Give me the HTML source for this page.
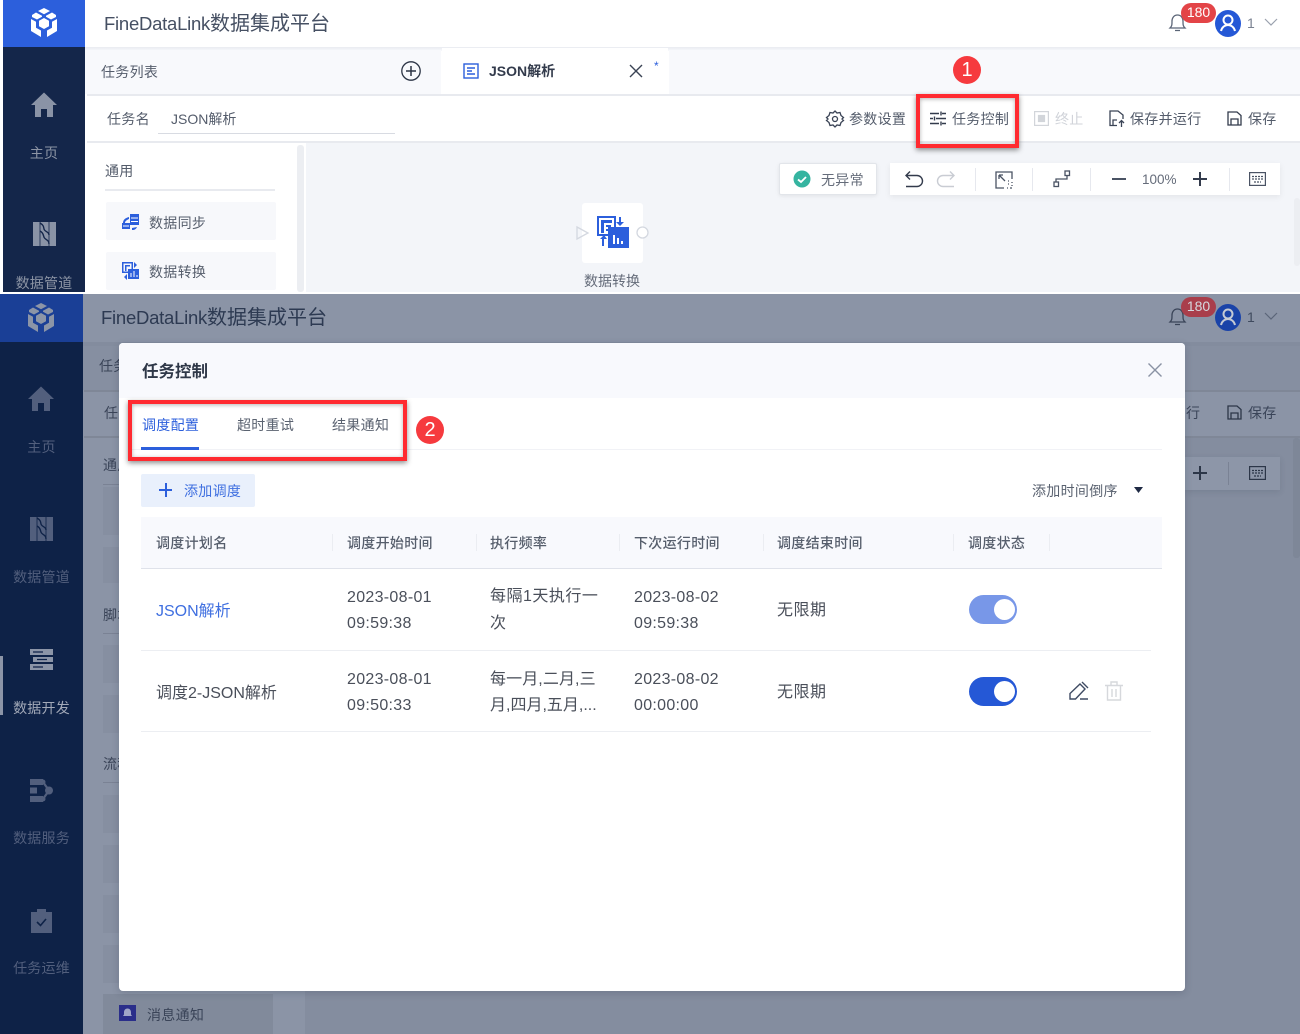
<!DOCTYPE html>
<html lang="zh"><head><meta charset="utf-8"><title>FineDataLink</title>
<style>
*{box-sizing:border-box}
html,body{margin:0;padding:0;background:#fff}
#p{position:relative;width:1300px;height:1034px;overflow:hidden;font-family:"Liberation Sans","Noto Sans CJK SC",sans-serif;background:#fff;filter:blur(.3px)}
.a{position:absolute}
.t{position:absolute;white-space:nowrap;line-height:20px;height:20px;font-size:14px;color:#4a5568;letter-spacing:.3px}
.s{color:#8d95a5;text-align:center}
svg{position:absolute;overflow:visible}
.dv{position:absolute;width:1px;background:#e6e8ee}
.r{font-size:16px;color:#4a4f5a;letter-spacing:.5px}
.h{color:#565e6c;font-weight:500}
.red{position:absolute;border:4px solid #ff2a30;box-shadow:0 2px 5px rgba(0,0,0,.45),inset 0 1px 4px rgba(0,0,0,.3)}
.c{position:absolute;width:28px;height:28px;border-radius:50%;background:#f63a3e;color:#fff;text-align:center;line-height:28px;font-size:20px}
.l{font-size:18.500px;letter-spacing:-.25px}
</style></head><body><div id="p">

<!-- TOP SECTION -->
<div class="a" style="left:0;top:0;width:1300px;height:292px;background:#fff;overflow:hidden">
<div class="a" style="left:3px;top:0;width:82px;height:292px;background:#14264a"></div>
<div class="a" style="left:3px;top:0;width:82px;height:47px;background:#2c5fdc"></div>
<svg style="left:30px;top:8px" width="28" height="30" viewBox="0 0 28 30" fill="#fff"><path d="M14 0l6 3-6 3.200-6-3.200zM6 4.500l6 3.200v1L7 11.500 2 9V7zM22 4.500L16 7.700v1l5 2.800 5-2.500V7zM14 10l5 2.800v5.400L14 21l-5-2.800v-5.400zM1 11l5 2.700v6l5 2.800v6.500L1 23zM27 11l-5 2.700v6l-5 2.800v6.500L27 23z"/></svg>
<div class="a" style="left:85px;top:47px;width:1215px;height:4px;background:linear-gradient(#e9ebf0,#f8f9fc)"></div>
<div class="t" style="left:104px;top:14px;font-size:20px;color:#465063;letter-spacing:0"><span class="l">FineDataLink</span>数据集成平台</div>
<svg style="left:1168px;top:13px" width="19" height="19" viewBox="0 0 19 19" fill="none" stroke="#5b6577" stroke-width="1.300"><path d="M2 15c2-2 2-3 2-7 0-3 2-6 5.500-6S15 5 15 8c0 4 0 5 2 7zM7 17.500h5"/></svg>
<div class="a" style="left:1181px;top:3px;width:35px;height:20px;border-radius:10px;background:#e34447;color:#fff;font-size:14px;line-height:19px;text-align:center">180</div>
<div class="a" style="left:1215px;top:10px;width:26px;height:27px;border-radius:50%;background:#2558d6"></div>
<svg style="left:1215px;top:10px" width="26" height="27" fill="none" stroke="#fff" stroke-width="2"><circle cx="13" cy="10" r="4.500"/><path d="M6 21c1-4 4-6 7-6s6 2 7 6"/></svg>
<div class="t" style="left:1247px;top:13px;color:#7a8291">1</div>
<svg style="left:1264px;top:18px" width="14" height="9" fill="none" stroke="#9aa1ae" stroke-width="1.200"><path d="M1 1l6 6 6-6"/></svg>

<!-- tab bar -->
<div class="a" style="left:85px;top:50px;width:356px;height:44px;background:#f8f9fc"></div>
<div class="a" style="left:442px;top:48px;width:226px;height:46px;background:#fff"></div>
<div class="a" style="left:669px;top:50px;width:631px;height:44px;background:#f8f9fc"></div>
<div class="a" style="left:87px;top:94px;width:1213px;height:2px;background:#e8eaef"></div>
<div class="t" style="left:101px;top:62px;color:#545c6b">任务列表</div>
<svg style="left:401px;top:61px" width="20" height="20" fill="none" stroke="#2b3445" stroke-width="1.300"><circle cx="10" cy="10" r="9.200"/><path d="M10 5v10M5 10h10" stroke-width="1.500"/></svg>
<svg style="left:463px;top:63px" width="16" height="16" fill="none" stroke="#2c5fdc" stroke-width="1.400"><rect x="1" y="1" width="14" height="14"/><path d="M4 5h8M4 8h5M4 11h8"/></svg>
<div class="t" style="left:489px;top:61px;font-weight:700;color:#333b4c;letter-spacing:0">JSON解析</div>
<svg style="left:629px;top:64px" width="14" height="14" stroke="#3a4354" stroke-width="1.400"><path d="M1 1l12 12M13 1L1 13"/></svg>
<div class="t" style="left:654px;top:56px;font-size:12px;color:#2c5fdc">*</div>

<!-- toolbar -->
<div class="a" style="left:87px;top:141px;width:1213px;height:2px;background:#e8eaef"></div>
<div class="t" style="left:107px;top:109px;color:#545c6b">任务名</div>
<div class="t" style="left:171px;top:109px;color:#545c6b;letter-spacing:0">JSON解析</div>
<div class="a" style="left:158px;top:133px;width:237px;height:1px;background:#d8dbe2"></div>
<svg style="left:826px;top:110px" width="18" height="18" fill="none" stroke="#3b4456" stroke-width="1.300"><path d="M9 1l2 2 3-.5 1 3 2.500 2L16 9l1.500 1.500-2.500 2-1 3-3-.5-2 2-2-2-3 .5-1-3L.5 10.500 2 9 .5 7.500 3 5.500l1-3 3 .5z"/><circle cx="9" cy="9" r="2.500"/></svg>
<div class="t" style="left:849px;top:109px;color:#545c6b">参数设置</div>
<svg style="left:930px;top:111px" width="16" height="15" stroke="#333b4c" stroke-width="1.400"><path d="M0 2.500h9M12 2.500h4M11 .5v4M0 7.500h3M6 7.500h10M4.500 5.500v4M0 12.500h9M12 12.500h4M11 10.500v4"/></svg>
<div class="t" style="left:952px;top:109px;color:#545c6b">任务控制</div>
<svg style="left:1034px;top:111px" width="15" height="15" fill="none" stroke="#d2d5da" stroke-width="1.200"><rect x=".6" y=".6" width="13.800" height="13.800"/><rect x="4.500" y="4.500" width="6" height="6" fill="#d2d5da"/></svg>
<div class="t" style="left:1055px;top:109px;color:#d0d3d9">终止</div>
<svg style="left:1109px;top:110px" width="17" height="18" fill="none" stroke="#3b4456" stroke-width="1.300"><path d="M8 15.500H1V1h8l5 4v4M4 15v-5h4M12.500 17v-6M10 13l2.500-2.500L15 13"/></svg>
<div class="t" style="left:1130px;top:109px;color:#545c6b">保存并运行</div>
<svg style="left:1227px;top:111px" width="15" height="15" fill="none" stroke="#333b4c" stroke-width="1.300"><path d="M1 1h9l4 3.500V14H1zM4 14V8h7v6"/></svg>
<div class="t" style="left:1248px;top:109px;color:#545c6b">保存</div>

<!-- left panel + canvas -->
<div class="a" style="left:297px;top:145px;width:7px;height:147px;background:#eceef2;border-radius:3px"></div>
<div class="a" style="left:306px;top:143px;width:994px;height:149px;background:#f3f5f9"></div>
<div class="t" style="left:105px;top:161px;color:#545c6b">通用</div>
<div class="a" style="left:105px;top:189px;width:170px;height:2px;background:#e8eaef"></div>
<div class="a" style="left:106px;top:202px;width:170px;height:38px;background:#f7f8fb;border-radius:2px"></div>
<div class="a" style="left:106px;top:252px;width:170px;height:38px;background:#f7f8fb;border-radius:2px"></div>
<svg style="left:122px;top:213px" width="17" height="18" fill="#2c5fdc"><path d="M8 1h9v11H8zM1 10c0-3 2-5 6-6v2C5 7 3 8 3 10zM0 10h8v6H0zM10 15l5-1c-1 2-2 3-5 3z"/><path d="M9 5h7M9 8.500h7M1 13h6" stroke="#fff"/></svg>
<div class="t" style="left:149px;top:213px;color:#565e6c">数据同步</div>
<svg style="left:122px;top:262px" width="17" height="18" fill="#2c5fdc"><path d="M0 0h11v11H0z"/><rect x="1.500" y="1.500" width="8" height="8" fill="#f7f8fb"/><path d="M3 3h5v1.500H4.500V9H3z"/><rect x="6" y="7" width="11" height="10"/><path d="M9 15V11M12 15V9M15 15v-2" stroke="#fff"/><path d="M12 0l3 3-3 3zM5 12l-3 3 3 3z"/></svg>
<div class="t" style="left:149px;top:262px;color:#565e6c">数据转换</div>
<svg style="left:30px;top:92px" width="28" height="26" fill="#8a93a6"><path d="M14 .5L27 13h-4v12h-6v-8h-6v8H5V13H1z"/></svg>
<div class="t s" style="left:3px;top:143px;width:82px;font-size:14px">主页</div>
<svg style="left:33px;top:222px" width="23" height="24"><rect width="23" height="24" fill="#8a93a6"/><path d="M7 0v24M16 0v24" stroke="#14264a" stroke-width=".8"/><path d="M7 1c5 3 3 5 4.500 7S16 10 16 13M7 9c4 2 3 5 4.500 7s4.500 2 4.500 6" fill="none" stroke="#14264a" stroke-width="1.400"/></svg>
<div class="t s" style="left:3px;top:273px;width:82px;font-size:14px;letter-spacing:.2px">数据管道</div>

<!-- canvas controls -->
<div class="a" style="left:779px;top:163px;width:98px;height:32px;background:#fff;border:1px solid #e2e5ea;border-radius:2px;box-shadow:0 1px 4px rgba(0,0,0,.08)"></div>
<svg style="left:793px;top:170px" width="18" height="18"><circle cx="9" cy="9" r="8.500" fill="#35b4a0"/><path d="M5 9.500l3 2.500 5-5" fill="none" stroke="#fff" stroke-width="1.800"/></svg>
<div class="t" style="left:821px;top:170px;color:#656c7a">无异常</div>
<div class="a" style="left:890px;top:163px;width:390px;height:32px;background:#fff;box-shadow:0 2px 6px rgba(0,0,0,.07)"></div>
<svg style="left:905px;top:171px" width="17" height="17" fill="none" stroke="#333b4c" stroke-width="1.400"><path d="M5 .5L1 4.500l4 4M1 4.500h11a4 4 0 010 11H1"/></svg>
<svg style="left:938px;top:171px" width="17" height="17" fill="none" stroke="#c9ccd3" stroke-width="1.400"><path d="M12 .5l4 4-4 4M16 4.500H5a4 4 0 000 11h11"/></svg>
<div class="dv" style="left:975px;top:168px;height:23px"></div>
<svg style="left:995px;top:171px" width="18" height="18" fill="none" stroke="#4a5364" stroke-width="1.300"><path d="M17 8V1H1v16h8" /><path d="M4 4l6 6M4 4h4M4 4v4"/><path d="M12 17h1M15 17h2M17 14v1M17 11v1M13 13h1M13 10h1" /></svg>
<div class="dv" style="left:1032px;top:168px;height:23px"></div>
<svg style="left:1053px;top:170px" width="17" height="18" fill="none" stroke="#4a5364" stroke-width="1.300"><rect x="1" y="12" width="4.500" height="4.500"/><rect x="12" y="1" width="4.500" height="4.500"/><path d="M3 12V9h11V6"/></svg>
<div class="dv" style="left:1090px;top:168px;height:23px"></div>
<div class="a" style="left:1112px;top:178px;width:14px;height:2px;background:#4a5364"></div>
<div class="t" style="left:1142px;top:170px;font-size:13.500px;color:#656c7a;letter-spacing:0">100%</div>
<div class="a" style="left:1193px;top:178px;width:14px;height:2px;background:#333b4c"></div>
<div class="a" style="left:1199px;top:172px;width:2px;height:14px;background:#333b4c"></div>
<div class="dv" style="left:1229px;top:168px;height:23px"></div>
<svg style="left:1249px;top:172px" width="17" height="14" fill="none" stroke="#4a5364" stroke-width="1.200"><rect x=".6" y=".6" width="15.800" height="12.800"/><path d="M3 4.500h11M3 7h11M5 10h7" stroke-dasharray="2 1"/></svg>
<div class="a" style="left:1294px;top:198px;width:6px;height:68px;background:#eceef2;border-radius:3px"></div>

<!-- node -->
<div class="a" style="left:582px;top:203px;width:61px;height:60px;background:#fff;border-radius:3px"></div>
<svg style="left:576px;top:226px" width="14" height="14" fill="none" stroke="#d4d8e0" stroke-width="1.300"><path d="M1 1l11 6-11 6z"/></svg>
<svg style="left:636px;top:226px" width="13" height="13" fill="#fff" stroke="#d4d8e0" stroke-width="1.300"><circle cx="6.500" cy="6.500" r="5.500"/></svg>
<svg style="left:597px;top:216px" width="32" height="32" fill="#2c5fdc"><path d="M0 0h19v20H0z"/><rect x="2" y="2" width="15" height="16" fill="#fff"/><path d="M4 4h11v3H7v10H4zM9 9h5v2H9zM9 13h3v2H9z"/><rect x="11" y="11" width="21" height="21"/><path d="M16 28V19h2v9zM20 28v-6h2v6zM24 28v-3h2v3z" fill="#fff"/><path d="M22 1v5h3l-4 4-4-4h3V1zM5 23h3l-3-4-4 4h2v7h2z" transform="translate(2 0)"/></svg>
<div class="t" style="left:584px;top:271px;color:#656c7a;letter-spacing:0">数据转换</div>

<div class="red" style="left:916px;top:94px;width:103px;height:54px"></div>
<div class="c" style="left:953px;top:56px">1</div>
</div>

<!-- BOTTOM SECTION -->
<div class="a" style="left:0;top:294px;width:1300px;height:740px;background:#8b94a6;overflow:hidden">
<div class="a" style="left:0;top:0;width:83px;height:740px;background:#0e2247"></div>
<div class="a" style="left:0;top:0;width:83px;height:48px;background:#1a3f96"></div>
<svg style="left:27px;top:9px" width="28" height="30" viewBox="0 0 28 30" fill="#8c95a7"><path d="M14 0l6 3-6 3.200-6-3.200zM6 4.500l6 3.200v1L7 11.500 2 9V7zM22 4.500L16 7.700v1l5 2.800 5-2.500V7zM14 10l5 2.800v5.400L14 21l-5-2.800v-5.400zM1 11l5 2.700v6l5 2.800v6.500L1 23zM27 11l-5 2.700v6l-5 2.800v6.500L27 23z"/></svg>
<div class="t" style="left:101px;top:14px;font-size:20px;color:#2d3a52;letter-spacing:0"><span class="l">FineDataLink</span>数据集成平台</div>
<svg style="left:1168px;top:13px" width="19" height="19" viewBox="0 0 19 19" fill="none" stroke="#3a4458" stroke-width="1.300"><path d="M2 15c2-2 2-3 2-7 0-3 2-6 5.500-6S15 5 15 8c0 4 0 5 2 7zM7 17.500h5"/></svg>
<div class="a" style="left:1181px;top:3px;width:35px;height:20px;border-radius:10px;background:#a93e4b;color:#d5d8de;font-size:14px;line-height:19px;text-align:center">180</div>
<div class="a" style="left:1215px;top:10px;width:26px;height:27px;border-radius:50%;background:#1a43a8"></div>
<svg style="left:1215px;top:10px" width="26" height="27" fill="none" stroke="#c5cad4" stroke-width="2"><circle cx="13" cy="10" r="4.500"/><path d="M6 21c1-4 4-6 7-6s6 2 7 6"/></svg>
<div class="t" style="left:1247px;top:13px;color:#3f4a5e">1</div>
<svg style="left:1264px;top:18px" width="14" height="9" fill="none" stroke="#5b6579" stroke-width="1.200"><path d="M1 1l6 6 6-6"/></svg>
<div class="a" style="left:83px;top:48px;width:1217px;height:4px;background:#838c9e"></div>
<div class="a" style="left:83px;top:52px;width:1217px;height:44px;background:#868fa1"></div>
<div class="a" style="left:84px;top:96px;width:1216px;height:2px;background:#7f8797"></div>
<div class="a" style="left:84px;top:142px;width:1216px;height:2px;background:#7f8797"></div>
<div class="a" style="left:305px;top:144px;width:995px;height:596px;background:#848d9f"></div>
<div class="a" style="left:1293px;top:144px;width:7px;height:120px;background:#7e8798;border-radius:3px"></div>
<div class="t" style="left:99px;top:62px;color:#3a4458">任务</div>
<div class="t" style="left:104px;top:109px;color:#3a4458">任务</div>
<div class="t" style="left:103px;top:161px;color:#3a4458">通用</div>
<div class="a" style="left:103px;top:190px;width:170px;height:1px;background:#7a8294"></div>
<div class="a" style="left:103px;top:193px;width:170px;height:48px;background:#868fa1"></div>
<div class="a" style="left:103px;top:253px;width:170px;height:36px;background:#868fa1"></div>
<div class="t" style="left:103px;top:311px;color:#3a4458">脚本</div>
<div class="a" style="left:103px;top:339px;width:170px;height:1px;background:#7a8294"></div>
<div class="a" style="left:103px;top:351px;width:170px;height:38px;background:#868fa1"></div>
<div class="a" style="left:103px;top:401px;width:170px;height:38px;background:#868fa1"></div>
<div class="t" style="left:103px;top:460px;color:#3a4458">流程</div>
<div class="a" style="left:103px;top:488px;width:170px;height:1px;background:#7a8294"></div>
<div class="a" style="left:103px;top:501px;width:170px;height:38px;background:#868fa1"></div>
<div class="a" style="left:103px;top:551px;width:170px;height:38px;background:#868fa1"></div>
<div class="a" style="left:103px;top:601px;width:170px;height:38px;background:#868fa1"></div>
<div class="a" style="left:103px;top:651px;width:170px;height:38px;background:#868fa1"></div>
<div class="a" style="left:103px;top:700px;width:170px;height:40px;background:#818a9b"></div>
<svg style="left:119px;top:711px" width="17" height="16"><rect width="17" height="16" fill="#2a2e8a"/><path d="M8.500 3.500c2.500 0 3.500 2 3.500 4v2l1 1.500H4l1-1.500v-2c0-2 1-4 3.500-4z" fill="#a0a6c8"/></svg>
<div class="t" style="left:147px;top:711px;color:#3a4458">消息通知</div>
<svg style="left:1227px;top:111px" width="15" height="15" fill="none" stroke="#2c3648" stroke-width="1.300"><path d="M1 1h9l4 3.500V14H1zM4 14V8h7v6"/></svg>
<div class="t" style="left:1248px;top:109px;color:#3a4458">保存</div>
<div class="t" style="left:1186px;top:109px;color:#3a4458">行</div>
<div class="a" style="left:1185px;top:163px;width:95px;height:33px;background:#8d96a8;box-shadow:0 2px 6px rgba(30,40,60,.12)"></div>
<div class="a" style="left:1193px;top:178px;width:14px;height:2px;background:#2c3648"></div>
<div class="a" style="left:1199px;top:172px;width:2px;height:14px;background:#2c3648"></div>
<div class="dv" style="left:1228px;top:168px;height:23px;background:#7a8294"></div>
<svg style="left:1249px;top:172px" width="17" height="14" fill="none" stroke="#2c3648" stroke-width="1.200"><rect x=".6" y=".6" width="15.800" height="12.800"/><path d="M3 4.500h11M3 7h11M5 10h7" stroke-dasharray="2 1"/></svg>

<!-- dark sidebar -->
<svg style="left:27px;top:92px" width="28" height="26" fill="#525f7d"><path d="M14 .5L27 13h-4v12h-6v-8h-6v8H5V13H1z"/></svg>
<div class="t s" style="left:0;top:143px;width:83px;color:#525f7d">主页</div>
<svg style="left:30px;top:223px" width="23" height="24"><rect width="23" height="24" fill="#525f7d"/><path d="M7 0v24M16 0v24" stroke="#0e2247" stroke-width=".8"/><path d="M7 1c5 3 3 5 4.500 7S16 10 16 13M7 9c4 2 3 5 4.500 7s4.500 2 4.500 6" fill="none" stroke="#0e2247" stroke-width="1.400"/></svg>
<div class="t s" style="left:0;top:273px;width:83px;color:#525f7d;letter-spacing:.2px">数据管道</div>
<div class="a" style="left:0;top:362px;width:3px;height:59px;background:#8c95a7"></div>
<svg style="left:30px;top:355px" width="23" height="21" fill="#8c95a7"><path d="M0 0h23v6H0zM3 8h20v5H3zM0 15h23v6H0z"/><path d="M3 3h10M7 10.500h10M3 18h10" stroke="#0e2247" stroke-width="1.200"/></svg>
<div class="t s" style="left:0;top:404px;width:83px;color:#a2a9b8;letter-spacing:.2px">数据开发</div>
<svg style="left:30px;top:485px" width="23" height="23" fill="#525f7d"><path d="M0 0h13v6H0zM0 8.500h7v6H0zM0 17h13v6H0z"/><circle cx="19" cy="11.500" r="4"/><circle cx="13" cy="3" r="2.500"/><circle cx="13" cy="20" r="2.500"/><path d="M13 3l6 8.500L13 20" fill="none" stroke="#525f7d" stroke-width="2.200"/></svg>
<div class="t s" style="left:0;top:534px;width:83px;color:#525f7d;letter-spacing:.2px">数据服务</div>
<svg style="left:31px;top:615px" width="21" height="24"><path d="M0 3h6V0h9v3h6v21H0z" fill="#525f7d"/><path d="M6 13l3.500 3.500L15 10" fill="none" stroke="#0e2247" stroke-width="1.600"/></svg>
<div class="t s" style="left:0;top:664px;width:83px;color:#525f7d;letter-spacing:.2px">任务运维</div>

<!-- dialog -->
<div class="a" style="left:119px;top:49px;width:1066px;height:648px;background:#fff;border-radius:4px;overflow:hidden;box-shadow:0 2px 8px rgba(20,30,50,.18)">
<div class="a" style="left:0;top:0;width:1066px;height:55px;background:#f8f9fd"></div>
</div>
<div class="t" style="left:142px;top:68px;font-size:16.500px;font-weight:700;color:#2f3848;letter-spacing:0">任务控制</div>
<svg style="left:1148px;top:69px" width="14" height="14" stroke="#8a92a3" stroke-width="1.400"><path d="M.5.500l13 13M13.500.500l-13 13"/></svg>
<div class="t" style="left:142px;top:121px;color:#2c5fdc">调度配置</div>
<div class="t" style="left:237px;top:121px;color:#5a6270">超时重试</div>
<div class="t" style="left:332px;top:121px;color:#5a6270">结果通知</div>
<div class="a" style="left:130px;top:155px;width:1032px;height:1px;background:#f1f2f6"></div>
<div class="a" style="left:141px;top:153px;width:58px;height:3px;background:#2c5fdc"></div>
<div class="a" style="left:141px;top:180px;width:114px;height:33px;background:#e9f0fc;border-radius:2px"></div>
<div class="a" style="left:159px;top:195px;width:13px;height:2px;background:#2c5fdc"></div>
<div class="a" style="left:165px;top:189px;width:2px;height:14px;background:#2c5fdc"></div>
<div class="t" style="left:184px;top:187px;color:#3f6fe0">添加调度</div>
<div class="t" style="left:1032px;top:187px;color:#5a6270">添加时间倒序</div>
<svg style="left:1134px;top:193px" width="9" height="6" fill="#1f2a44"><path d="M0 0h9L4.500 6z"/></svg>

<!-- table -->
<div class="a" style="left:141px;top:223px;width:1021px;height:51px;background:#f8f9fd"></div>
<div class="a" style="left:141px;top:274px;width:1021px;height:1px;background:#dfe2ea"></div>
<div class="dv" style="left:332px;top:240px;height:17px;background:#ebedf2"></div>
<div class="dv" style="left:476px;top:240px;height:17px;background:#ebedf2"></div>
<div class="dv" style="left:619px;top:240px;height:17px;background:#ebedf2"></div>
<div class="dv" style="left:763px;top:240px;height:17px;background:#ebedf2"></div>
<div class="dv" style="left:953px;top:240px;height:17px;background:#ebedf2"></div>
<div class="dv" style="left:1049px;top:240px;height:17px;background:#ebedf2"></div>
<div class="t h" style="left:156px;top:239px">调度计划名</div>
<div class="t h" style="left:347px;top:239px">调度开始时间</div>
<div class="t h" style="left:490px;top:239px">执行频率</div>
<div class="t h" style="left:634px;top:239px">下次运行时间</div>
<div class="t h" style="left:777px;top:239px">调度结束时间</div>
<div class="t h" style="left:968px;top:239px">调度状态</div>

<div class="t r" style="left:156px;top:308px;color:#3f6fe0;letter-spacing:0">JSON解析</div>
<div class="t r" style="left:347px;top:294px;letter-spacing:.3px">2023-08-01</div>
<div class="t r" style="left:347px;top:320px;letter-spacing:.3px">09:59:38</div>
<div class="t r" style="left:490px;top:293px">每隔1天执行一</div>
<div class="t r" style="left:490px;top:320px">次</div>
<div class="t r" style="left:634px;top:294px;letter-spacing:.3px">2023-08-02</div>
<div class="t r" style="left:634px;top:320px;letter-spacing:.3px">09:59:38</div>
<div class="t r" style="left:777px;top:307px">无限期</div>
<div class="a" style="left:969px;top:301px;width:48px;height:29px;border-radius:15px;background:#7897e8"></div>
<div class="a" style="left:994px;top:305px;width:21px;height:21px;border-radius:50%;background:#fff"></div>
<div class="a" style="left:141px;top:356px;width:1010px;height:1px;background:#eceef2"></div>

<div class="t r" style="left:156px;top:390px;letter-spacing:0">调度2-JSON解析</div>
<div class="t r" style="left:347px;top:376px;letter-spacing:.3px">2023-08-01</div>
<div class="t r" style="left:347px;top:402px;letter-spacing:.3px">09:50:33</div>
<div class="t r" style="left:490px;top:376px;letter-spacing:.1px">每一月,二月,三</div>
<div class="t r" style="left:490px;top:402px;letter-spacing:0">月,四月,五月,...</div>
<div class="t r" style="left:634px;top:376px;letter-spacing:.3px">2023-08-02</div>
<div class="t r" style="left:634px;top:402px;letter-spacing:.3px">00:00:00</div>
<div class="t r" style="left:777px;top:389px">无限期</div>
<div class="a" style="left:969px;top:383px;width:48px;height:29px;border-radius:15px;background:#2558d6"></div>
<div class="a" style="left:994px;top:387px;width:21px;height:21px;border-radius:50%;background:#fff"></div>
<svg style="left:1069px;top:387px" width="20" height="20" fill="none" stroke="#3f4b63" stroke-width="1.400"><path d="M1 18v-5.500L11 3l5 5-9.500 10zM13 1l6 6M11 18h8"/></svg>
<svg style="left:1105px;top:387px" width="19" height="20" fill="none" stroke="#d6d8dc" stroke-width="1.400"><path d="M0 4.500h18M6 4V1h6v3M2.500 5v14h13V5M7 8v8M11 8v8"/></svg>
<div class="a" style="left:141px;top:437px;width:1010px;height:1px;background:#eceef2"></div>

<div class="red" style="left:128px;top:106px;width:279px;height:61px"></div>
<div class="c" style="left:416px;top:122px">2</div>
</div>
</div></body></html>
